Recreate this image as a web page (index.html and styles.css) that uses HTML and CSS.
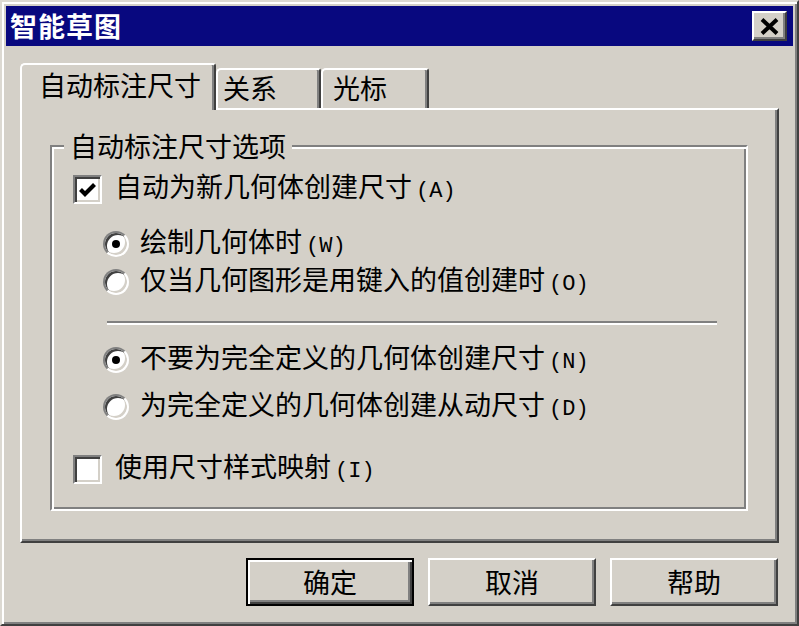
FILE: index.html
```html
<!DOCTYPE html>
<html lang="zh-CN">
<head>
<meta charset="utf-8">
<title>智能草图</title>
<link rel="stylesheet" href="styles.css">
</head>
<body>
<div class="window">
  <div class="titlebar">
    <span class="title">智能草图</span>
    <button class="close" aria-label="关闭">
      <svg width="19" height="17" viewBox="0 0 19 17"><path d="M2 1.5 L17 15.5 M17 1.5 L2 15.5" stroke="#000" stroke-width="4" fill="none"/></svg>
    </button>
  </div>
  <div class="body">
    <div class="tabs">
      <div class="tab tab-active">自动标注尺寸</div>
      <div class="tab tab-rel">关系</div>
      <div class="tab tab-cur">光标</div>
    </div>
    <div class="panel">
      <fieldset class="group">
        <legend>自动标注尺寸选项</legend>
        <div class="row check-row row-cb1">
          <span class="checkbox"><svg width="25" height="25" viewBox="0 0 25 25"><path d="M5.5 12.5 L10 17 L19.5 7.5" stroke="#000" stroke-width="4.2" fill="none"/></svg></span>
          <span class="label">自动为新几何体创建尺寸<span class="key">(A)</span></span>
        </div>
        <div class="row radio-row row-r1">
          <span class="radio checked"></span>
          <span class="label">绘制几何体时<span class="key">(W)</span></span>
        </div>
        <div class="row radio-row row-r2">
          <span class="radio"></span>
          <span class="label">仅当几何图形是用键入的值创建时<span class="key">(O)</span></span>
        </div>
        <div class="separator"></div>
        <div class="row radio-row row-r3">
          <span class="radio checked"></span>
          <span class="label">不要为完全定义的几何体创建尺寸<span class="key">(N)</span></span>
        </div>
        <div class="row radio-row row-r4">
          <span class="radio"></span>
          <span class="label">为完全定义的几何体创建从动尺寸<span class="key">(D)</span></span>
        </div>
        <div class="row check-row row-cb2">
          <span class="checkbox"></span>
          <span class="label">使用尺寸样式映射<span class="key">(I)</span></span>
        </div>
      </fieldset>
    </div>
    <div class="buttons">
      <button class="btn btn-default">确定</button>
      <button class="btn">取消</button>
      <button class="btn">帮助</button>
    </div>
  </div>
</div>
</body>
</html>
```

FILE: styles.css
```css
html, body {
  margin: 0;
  padding: 0;
}

body {
  width: 799px;
  height: 626px;
  overflow: hidden;
  background: #d4d0c8;
  font-family: "Noto Sans CJK SC", "Noto Sans", sans-serif;
  color: #000;
}

.window {
  box-sizing: border-box;
  width: 799px;
  height: 626px;
  background: #d4d0c8;
  border: 2px solid;
  border-color: #dcd9d2 #404040 #404040 #dcd9d2;
  box-shadow: inset 2px 2px #fff, inset -2px -2px #808080;
  padding: 4px;
  display: flex;
  flex-direction: column;
}

.titlebar {
  height: 40px;
  flex: none;
  background: #08087f;
  display: flex;
  align-items: center;
  justify-content: space-between;
  padding: 0 6px 0 4px;
}

.title {
  color: #fff;
  font-weight: 700;
  font-size: 27px;
  line-height: 40px;
  letter-spacing: 1px;
}

.close {
  box-sizing: border-box;
  width: 35px;
  height: 30px;
  padding: 0;
  margin: 0;
  background: #d4d0c8;
  border: 2px solid;
  border-color: #fff #404040 #404040 #fff;
  box-shadow: inset -2px -2px #808080;
  display: flex;
  align-items: center;
  justify-content: center;
}

.body {
  flex: 1;
  padding: 17px 14px 0 14px;
  display: flex;
  flex-direction: column;
}

.tabs {
  display: flex;
  align-items: flex-start;
  height: 45px;
  position: relative;
  z-index: 1;
}

.tab {
  box-sizing: border-box;
  height: 40px;
  margin-top: 5px;
  border-top: 2px solid #fff;
  border-left: 2px solid #fff;
  border-right: 2px solid #404040;
  border-radius: 5px 3px 0 0;
  box-shadow: inset -2px 0 #808080;
  background: #d4d0c8;
  font-size: 27px;
  line-height: 36px;
  white-space: nowrap;
}

.tab-active {
  width: 196px;
  height: 47px;
  margin-top: 0;
  padding-left: 17px;
  line-height: 40px;
  position: relative;
  z-index: 2;
}

.tab-rel {
  width: 105px;
  padding-left: 5px;
}

.tab-cur {
  width: 108px;
  padding-left: 10px;
}

.panel {
  box-sizing: border-box;
  height: 435px;
  flex: none;
  border: 2px solid;
  border-color: #fff #404040 #404040 #fff;
  box-shadow: inset -2px -2px #808080;
  padding: 21px 29px 0 28px;
}

.group {
  box-sizing: border-box;
  height: 380px;
  margin: 0;
  padding: 0;
  min-inline-size: 0;
  border: 2px solid;
  border-color: #808080 #fff #fff #808080;
  box-shadow: inset 2px 2px #fff, inset -2px -2px #808080;
}

.group legend {
  margin-left: 12px;
  padding: 0 6px;
  font-size: 27px;
  line-height: 30px;
  background: #d4d0c8;
}

.row {
  display: flex;
  align-items: center;
  height: 36px;
  font-size: 27px;
  line-height: 36px;
  white-space: nowrap;
}

.check-row {
  padding-left: 21px;
}

.radio-row {
  padding-left: 51px;
}

.row-cb1 { margin-top: 10px; }
.row-r1 { margin-top: 19px; }
.row-r2 { margin-top: 2px; }
.row-r3 { margin-top: 17px; }
.row-r4 { margin-top: 11px; }
.row-cb2 { margin-top: 26px; }

.checkbox {
  box-sizing: border-box;
  flex: none;
  width: 29px;
  height: 29px;
  margin-right: 13px;
  border: 2px solid;
  border-color: #808080 #fff #fff #808080;
  box-shadow: inset 2px 2px #404040, inset -2px -2px #d4d0c8;
  background: #fff;
  display: flex;
}

.radio {
  box-sizing: border-box;
  flex: none;
  width: 26px;
  height: 26px;
  margin-right: 11px;
  border-radius: 50%;
  border: 2px solid;
  border-color: #808080 #fff #fff #808080;
  box-shadow: inset 2px 2px #404040, inset -2px -2px #d4d0c8;
  background: #fff;
  display: flex;
  align-items: center;
  justify-content: center;
}

.radio.checked::after {
  content: "";
  width: 8px;
  height: 8px;
  border-radius: 50%;
  background: #000;
}

.key {
  font-family: "Liberation Mono", monospace;
  font-size: 22px;
  margin-left: 4px;
}

.separator {
  margin: 21px 0 0 55px;
  width: 610px;
  height: 2px;
  background: #808080;
  border-bottom: 2px solid #fff;
}

.buttons {
  display: flex;
  justify-content: flex-end;
  gap: 14px;
  margin-top: 15px;
  padding-right: 1px;
}

.btn {
  box-sizing: border-box;
  width: 168px;
  height: 48px;
  padding: 0;
  margin: 0;
  font-family: "Noto Sans CJK SC", "Noto Sans", sans-serif;
  font-size: 27px;
  line-height: 40px;
  color: #000;
  background: #d4d0c8;
  border: 2px solid;
  border-color: #fff #404040 #404040 #fff;
  box-shadow: inset -2px -2px #808080;
}

.btn-default {
  border: 2px solid #000;
  box-shadow: inset 2px 2px #fff, inset -2px -2px #404040, inset -4px -4px #808080;
}
```
